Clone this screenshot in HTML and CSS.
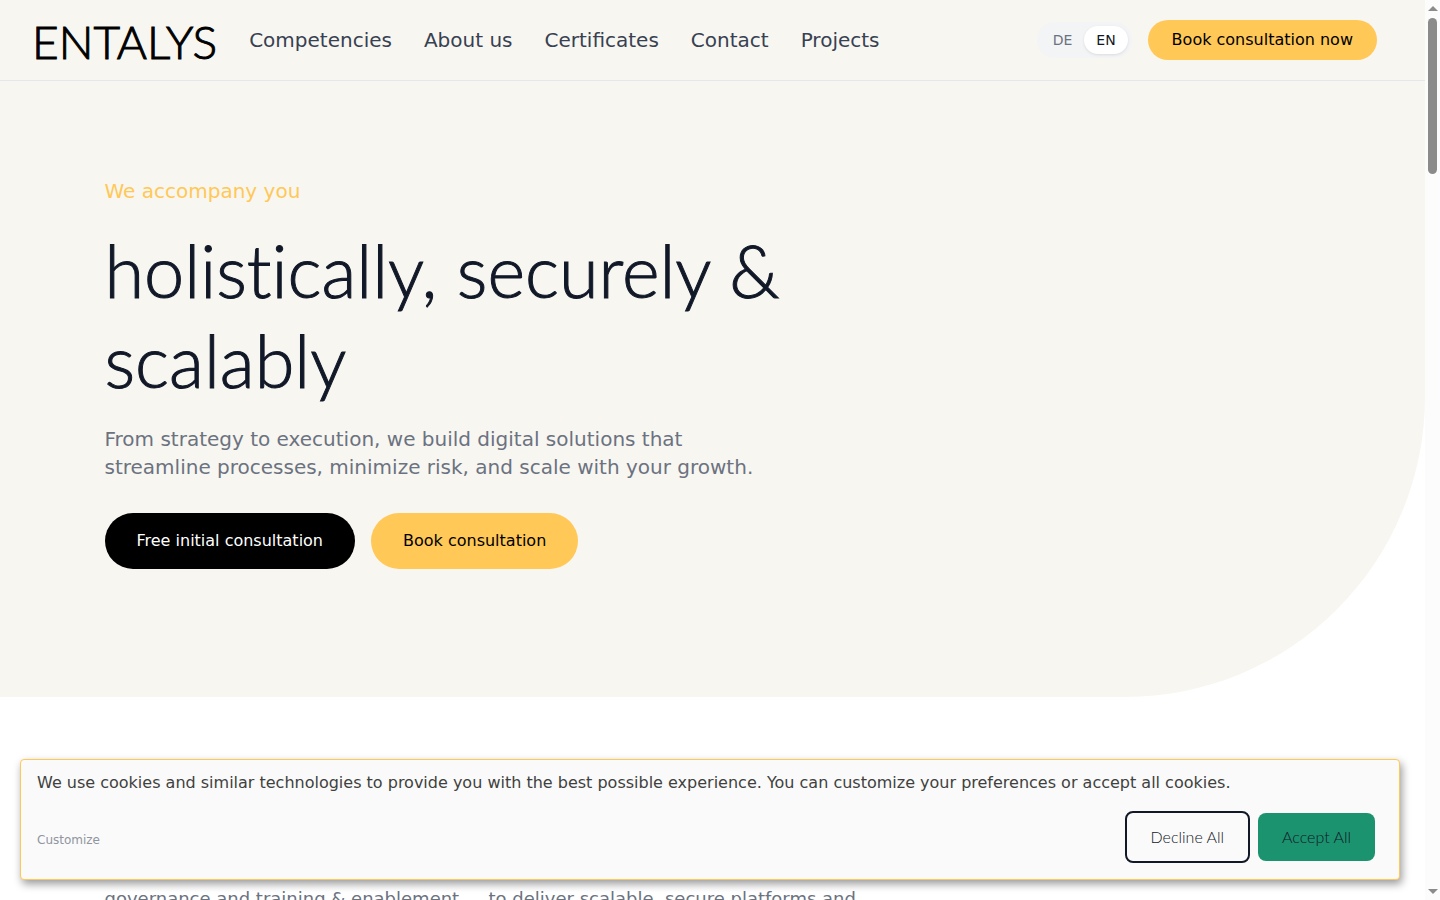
FILE: index.html
```html
<!DOCTYPE html>
<html lang="en">
<head>
    <meta charset="UTF-8">
    <meta name="viewport" content="width=device-width, initial-scale=1.0">
    <title>ENTALYS</title>
    <link rel="stylesheet" href="styles.css">
</head>
<body>

<div class="page">
    <header class="header">
        <a href="#" class="logo">ENTALYS</a>
        <nav class="nav">
            <a href="#competencies">Competencies</a>
            <a href="#about">About us</a>
            <a href="#certificates">Certificates</a>
            <a href="#contact">Contact</a>
            <a href="#projects">Projects</a>
        </nav>
        <div class="header-actions">
            <div class="lang">
                <button type="button" class="lang-btn">DE</button>
                <button type="button" class="lang-btn active">EN</button>
            </div>
            <a href="#book" class="btn btn-small btn-yellow">Book consultation now</a>
        </div>
    </header>

    <main>
        <section class="hero">
            <div class="container">
                <p class="tagline">We accompany you</p>
                <h1>holistically, securely &amp; scalably</h1>
                <p class="intro">From strategy to execution, we build digital solutions that streamline processes, minimize risk, and scale with your growth.</p>
                <div class="buttons">
                    <a href="#initial" class="btn btn-black">Free initial consultation</a>
                    <a href="#book" class="btn btn-yellow">Book consultation</a>
                </div>
            </div>
        </section>

        <section class="services">
            <div class="container services-grid">
                <p>governance and training &amp; enablement</p>
                <p>to deliver scalable, secure platforms and</p>
            </div>
        </section>
    </main>

    <div class="cookie" role="dialog" aria-label="Cookies">
        <p>We use cookies and similar technologies to provide you with the best possible experience. You can customize your preferences or accept all cookies.</p>
        <div class="cookie-row">
            <button type="button" class="customize">Customize</button>
            <div class="cookie-buttons">
                <button type="button" class="cookie-btn decline">Decline All</button>
                <button type="button" class="cookie-btn accept">Accept All</button>
            </div>
        </div>
    </div>
</div>

<div class="scrollbar" aria-hidden="true">
    <span class="arrow arrow-up"></span>
    <span class="thumb"></span>
    <span class="arrow arrow-down"></span>
</div>

</body>
</html>
```
FILE: styles.css
```css
* {
    box-sizing: border-box;
}
body {
    font-family: "DejaVu Sans", sans-serif;
    background-color: #fff;
    display: flex;
    height: 100vh;
    margin: 0;
    overflow: hidden;
}
h1, p {
    margin: 0;
}
a {
    color: inherit;
    text-decoration: none;
}
button {
    font-family: inherit;
    border: none;
    cursor: pointer;
}
.page {
    position: relative;
    flex: 1;
    min-width: 0;
    overflow: hidden;
}

/* header */
.header {
    display: flex;
    align-items: center;
    height: 81px;
    padding: 0 48px 0 32px;
    background-color: #f8f6f1;
    border-bottom: 1px solid #e5e7eb;
}
.logo {
    padding-top: 4px;
    font-family: Lato, sans-serif;
    font-weight: 300;
    font-size: 46px;
    line-height: 56px;
    color: #000;
    -webkit-text-stroke: 1px #000;
}
.nav {
    display: flex;
    gap: 32px;
    margin-left: 32px;
    font-size: 20px;
    line-height: 28px;
    color: #374151;
}
.header-actions {
    display: flex;
    align-items: center;
    gap: 16px;
    margin-left: auto;
}
.lang {
    display: flex;
    padding: 4px;
    border-radius: 20px;
    background-color: #f3f4f6;
}
.lang-btn {
    padding: 4px 12px;
    border-radius: 14px;
    background: none;
    font-size: 14px;
    line-height: 20px;
    color: #6b7280;
}
.lang-btn.active {
    background-color: #fff;
    color: #111827;
    box-shadow: 0 1px 3px rgba(0, 0, 0, 0.1);
}

/* buttons */
.btn {
    padding: 16px 32px;
    border-radius: 28px;
    font-size: 16px;
    line-height: 24px;
}
.btn-small {
    padding: 8px 24px;
}
.btn-yellow {
    background-color: #ffc857;
    color: #000;
}
.btn-black {
    background-color: #000;
    color: #fff;
}

/* hero */
.container {
    max-width: 1280px;
    margin: 0 auto;
    padding: 0 32px;
}
.hero {
    padding: 96px 0 128px;
    background-color: #f8f6f1;
    border-bottom-right-radius: 300px;
}
.tagline {
    margin-bottom: 20px;
    font-size: 20px;
    line-height: 28px;
    color: #ffc857;
}
.hero h1 {
    max-width: 720px;
    margin-bottom: 20px;
    font-family: Lato, sans-serif;
    font-weight: 300;
    font-size: 72px;
    line-height: 90px;
    color: #111827;
    font-variant-ligatures: none;
    -webkit-text-stroke: 1px #111827;
}
.intro {
    max-width: 672px;
    margin-bottom: 32px;
    font-size: 20px;
    line-height: 28px;
    color: #6b7280;
}
.buttons {
    display: flex;
    gap: 16px;
}

/* services */
.services {
    padding-top: 188px;
}
.services-grid {
    display: grid;
    grid-template-columns: 368px 368px;
    gap: 16px;
    font-size: 18px;
    line-height: 28px;
    color: #6b7280;
    white-space: nowrap;
}

/* cookie banner */
.cookie {
    position: absolute;
    left: 20px;
    right: 25px;
    bottom: 20px;
    padding: 12px 24px 16px 16px;
    background-color: #fafafa;
    border: 1px solid #ffc857;
    border-radius: 4px;
    box-shadow: 2px 4px 8px rgba(0, 0, 0, 0.4);
    color: #40413e;
    font-size: 16px;
    line-height: 22px;
}
.cookie-row {
    display: flex;
    align-items: center;
    justify-content: space-between;
    margin-top: 17px;
}
.cookie-buttons {
    display: flex;
    align-items: center;
    gap: 8px;
}
.customize {
    padding: 14px 0 8px;
    background: none;
    font-size: 12px;
    line-height: 18px;
    color: #9095a0;
}
.cookie-btn {
    padding: 12px 24px;
    border-radius: 8px;
    font-family: Lato, sans-serif;
    font-weight: 300;
    font-size: 16px;
    line-height: 24px;
    color: #111827;
}
.decline {
    border: 2px solid #111827;
    background-color: #fafafa;
}
.accept {
    background-color: #1b936f;
}

/* scrollbar */
.scrollbar {
    display: flex;
    flex-direction: column;
    align-items: center;
    width: 15px;
    padding: 6px 0;
    background-color: #fcfcfc;
}
.arrow {
    border: 5px solid transparent;
}
.arrow-up {
    border-top: none;
    border-bottom-color: #8b8b8b;
}
.arrow-down {
    margin-top: auto;
    border-bottom: none;
    border-top-color: #8b8b8b;
}
.thumb {
    width: 9px;
    height: 156px;
    margin-top: 7px;
    border-radius: 5px;
    background-color: #8b8b8b;
}
```
